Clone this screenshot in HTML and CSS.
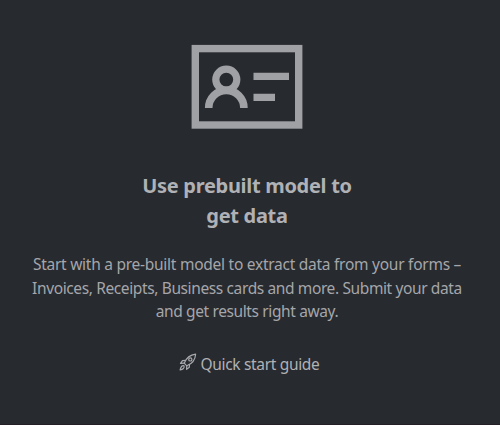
FILE: index.html
```html
<!DOCTYPE html>
<html lang="en">
<head>
<meta charset="utf-8">
<title>Prebuilt model</title>
<link rel="stylesheet" href="styles.css">
</head>
<body>
<section class="card">
  <svg class="card-icon" viewBox="0 0 112 85" aria-hidden="true">
    <rect x="4.3" y="4.6" width="103.4" height="76.4" stroke-width="7.4"/>
    <circle cx="35.3" cy="35.6" r="10.5" stroke-width="7.2"/>
    <path d="M17.7 64A17.5 17.5 0 0 1 52.9 64" stroke-width="7.6"/>
    <path d="M62.5 32.3H98M62.5 53.3H84" stroke-width="7.2"/>
  </svg>
  <h2 class="card-title">Use prebuilt model to<br>get data</h2>
  <p class="card-text"><span class="opening">Start with a pre-built model to extract data from your forms –</span><br>Invoices, Receipts, Business cards and more. Submit your data<br>and get results right away.</p>
  <a class="card-link">
    <svg class="rocket" viewBox="0 0 18 18" aria-hidden="true">
      <path d="M5.2 10.2C7 5.8 10.8 1.9 16.6 1.2C16.3 7 12.3 11 7.8 12.8Z"/>
      <path d="M6.5 7.4L3.5 7.7L1.5 10.4L5.2 10.2M10.5 11.3L10.3 14.3L7.6 16.4L7.8 12.8"/>
      <circle cx="11.3" cy="6.4" r="1.6"/>
      <path d="M5 12.8C3.2 12.3 2 13.3 1.1 16.8C4.1 16.4 5.7 15 5 12.8Z"/>
    </svg>
    <span>Quick start guide</span>
  </a>
</section>
</body>
</html>
```

FILE: styles.css
```css
* { box-sizing: border-box; }
body { margin: 0; background: #272a2f; }
.card {
  display: flex;
  flex-direction: column;
  align-items: center;
  height: 425px;
  padding-top: 44px;
  padding-right: 6px;
  border-bottom: 1px solid #241e27;
  font-family: "Noto Sans", sans-serif;
  color: #a5a6aa;
  text-align: center;
  white-space: nowrap;
}
.card-icon {
  width: 112px;
  height: 85px;
  fill: none;
  stroke: #a0a1a5;
}
.card-title {
  margin: 42px 0 0;
  font-size: 20px;
  line-height: 30px;
  font-weight: 700;
  letter-spacing: -0.3px;
  color: #b0b1b5;
}
.card-text {
  margin: 22px 0 0;
  font-size: 15.5px;
  line-height: 23.5px;
  letter-spacing: -0.38px;
}
.opening { letter-spacing: -0.26px; }
.card-link {
  display: flex;
  align-items: center;
  gap: 4px;
  margin-top: 28px;
  padding-left: 4px;
  font-size: 15.5px;
  line-height: 24px;
  letter-spacing: -0.34px;
  color: #b0b1b5;
}
.rocket {
  width: 18px;
  height: 18px;
  margin-top: -4px;
  fill: none;
  stroke: #a8a9ad;
  stroke-width: 1.2;
  stroke-linejoin: round;
}
```
